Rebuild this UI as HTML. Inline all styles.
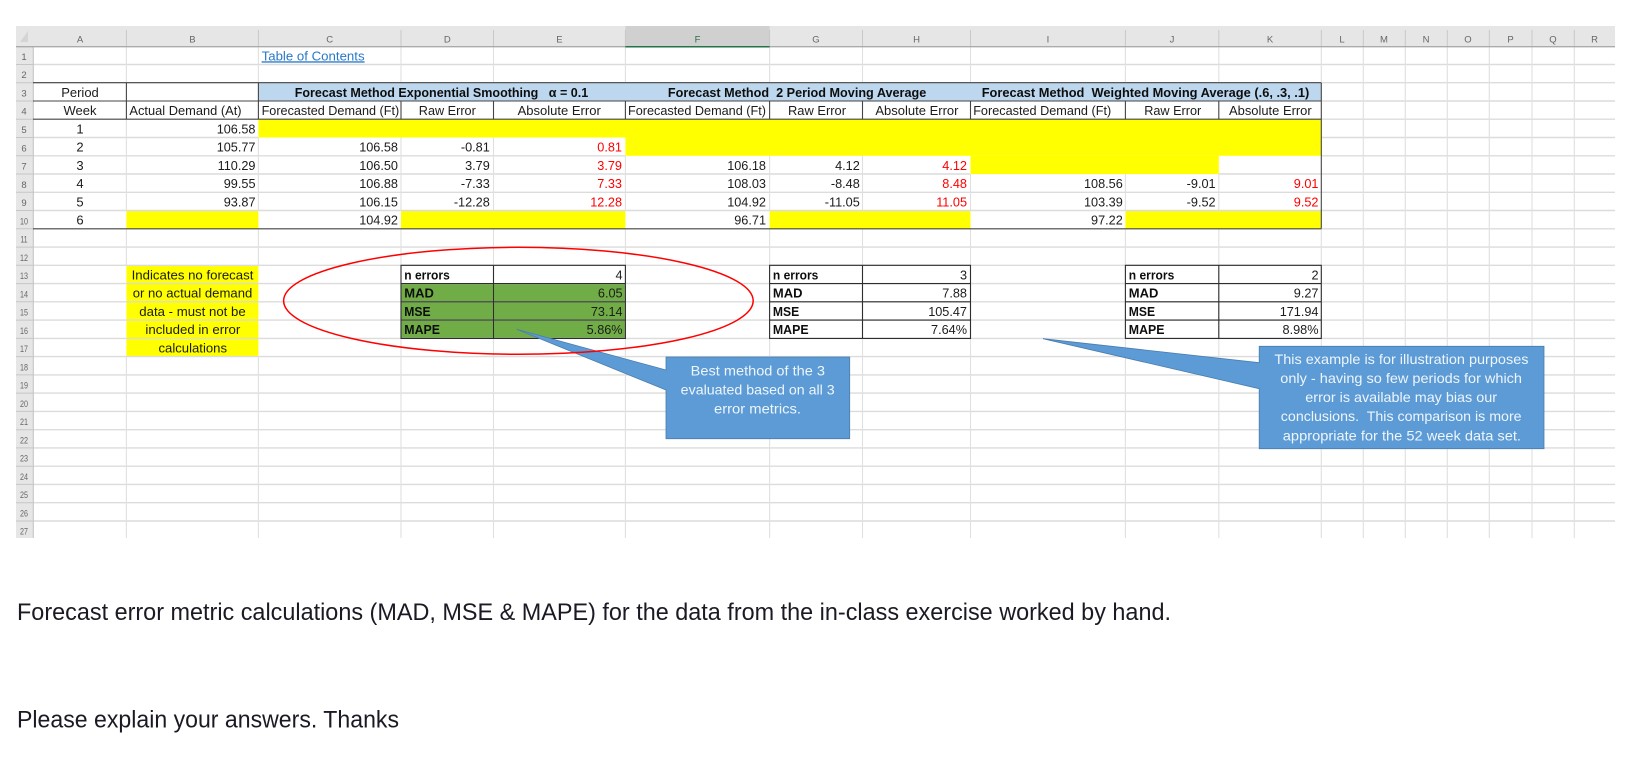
<!DOCTYPE html>
<html><head><meta charset="utf-8"><title>Forecast error metrics</title>
<style>
html,body{margin:0;padding:0;background:#fff;width:1629px;height:769px;overflow:hidden}
svg{display:block;position:absolute;left:0;top:0}
text{font-family:"Liberation Sans",sans-serif}
.c{font-size:13.3px;fill:#1c1c1c}
.r{font-size:12.7px;fill:#1c1c1c;text-anchor:end}
.m{font-size:13px;fill:#1c1c1c;text-anchor:middle}
.red{font-size:12.7px;fill:#f00;text-anchor:end}
.b{font-size:13.3px;fill:#111;font-weight:bold}
.h{font-size:9.5px;fill:#666;text-anchor:middle}
.w{font-size:13.8px;fill:#eef5fb}
.p{font-size:23.6px;fill:#1a1a24}
</style></head><body>
<svg width="1629" height="769" viewBox="0 0 1629 769" xmlns="http://www.w3.org/2000/svg">
<defs><filter id="s" x="0" y="0" width="100%" height="100%"><feGaussianBlur stdDeviation="0.35"/></filter></defs>
<g filter="url(#s)">
<!-- headers -->
<rect x="16" y="26" width="1599" height="20.7" fill="#e6e6e6"/>
<rect x="16" y="26" width="17.3" height="512" fill="#e6e6e6"/>
<rect x="625.4" y="26" width="144.2" height="20.7" fill="#d0d0d0"/>
<polygon points="28,31 28,42 20,42" fill="#d4d4d4"/>
<!-- fills -->
<rect x="258.4" y="82.7" width="1062.9" height="18.3" fill="#BDD7EE"/>
<rect x="258.4" y="119.2" width="1062.9" height="18.3" fill="#ff0"/>
<rect x="625.4" y="137.5" width="695.9" height="18.3" fill="#ff0"/>
<rect x="970.5" y="155.8" width="248.3" height="18.3" fill="#ff0"/>
<rect x="126.4" y="210.5" width="132" height="18.3" fill="#ff0"/>
<rect x="401" y="210.5" width="224.4" height="18.3" fill="#ff0"/>
<rect x="769.6" y="210.5" width="200.9" height="18.3" fill="#ff0"/>
<rect x="1125.4" y="210.5" width="195.9" height="18.3" fill="#ff0"/>
<rect x="126.4" y="265.3" width="132" height="91.3" fill="#ff0"/>
<rect x="401" y="283.6" width="224.4" height="54.8" fill="#70AD47"/>
<!-- horizontal grid -->
<path stroke="#dcdcdc" stroke-width="1.4" fill="none" d="M33 64.5H1615M33 82.7H1615M1321 101H1615M1321 119.2H1615M1321 137.5H1615M33 155.8H625M1321 155.8H1615M33 174H970M1219 174H1615M33 192.3H1615M33 210.5H1615M33 247.1H1615M33 265.3H1615M33 283.6H1615M33 301.8H1615M33 320.1H1615M33 338.4H1615M33 356.6H1615M33 374.9H1615M33 393.1H1615M33 411.4H1615M33 429.7H1615M33 447.9H1615M33 466.2H1615M33 484.4H1615M33 502.7H1615M33 521H1615"/>
<path stroke="#dcdcdc" stroke-width="1.4" fill="none" d="M33 137.5H258M1321 228.8H1615"/>
<!-- vertical grid -->
<path stroke="#e0e0e0" stroke-width="1.1" fill="none" d="M126.4 46.7V82.7M126.4 119.2V210.5M126.4 228.8V265.3M126.4 356.6V538M258.4 46.7V82.7M258.4 137.5V210.5M258.4 228.8V265.3M258.4 356.6V538M401 46.7V82.7M401 137.5V210.5M401 228.8V538M493.5 46.7V82.7M493.5 137.5V210.5M493.5 228.8V538M625.4 46.7V82.7M625.4 155.8V210.5M625.4 228.8V538M769.6 46.7V82.7M769.6 155.8V210.5M769.6 228.8V538M862.5 46.7V82.7M862.5 155.8V210.5M862.5 228.8V538M970.5 46.7V82.7M970.5 174V210.5M970.5 228.8V538M1125.4 46.7V82.7M1125.4 174V210.5M1125.4 228.8V538M1218.8 46.7V82.7M1218.8 174V210.5M1218.8 228.8V538M1321.3 228.8V538M1321.3 46.7V82.7M1363.3 46.7V538M1405.3 46.7V538M1447.3 46.7V538M1489.3 46.7V538M1532 46.7V538M1574.3 46.7V538"/>
<!-- header separators -->
<path stroke="#c8c8c8" stroke-width="1" fill="none" d="M126.4 30V46M258.4 30V46M401 30V46M493.5 30V46M625.4 30V46M769.6 30V46M862.5 30V46M970.5 30V46M1125.4 30V46M1218.8 30V46M1321.3 30V46M1363.3 30V46M1405.3 30V46M1447.3 30V46M1489.3 30V46M1532 30V46M1574.3 30V46"/>
<path stroke="#c6c6c6" stroke-width="1" fill="none" d="M16 64.5H33M16 82.7H33M16 101H33M16 119.2H33M16 137.5H33M16 155.8H33M16 174H33M16 192.3H33M16 210.5H33M16 228.8H33M16 247.1H33M16 265.3H33M16 283.6H33M16 301.8H33M16 320.1H33M16 338.4H33M16 356.6H33M16 374.9H33M16 393.1H33M16 411.4H33M16 429.7H33M16 447.9H33M16 466.2H33M16 484.4H33M16 502.7H33M16 521H33"/>
<path stroke="#c8c8c8" stroke-width="1.2" fill="none" d="M33.3 46V538"/>
<path stroke="#ababab" stroke-width="1.4" fill="none" d="M16 46.7H1615"/>
<path stroke="#217346" stroke-width="1.5" fill="none" d="M625.4 46.7H769.6"/>
<!-- dark borders -->
<path stroke="#444" stroke-width="1.1" fill="none" d="M33 82.7H1321.3M33 101H1321.3M33 119.2H1321.3M33 228.8H1321.3M126.4 82.7V119.2M258.4 82.7V119.2M401 101V119.2M493.5 101V119.2M625.4 101V119.2M769.6 101V119.2M862.5 101V119.2M970.5 101V119.2M1125.4 101V119.2M1218.8 101V119.2M1321.3 82.7V228.8"/>
<path stroke="#2e2e2e" stroke-width="1.1" fill="none" d="M401 265.3H625.4V338.4H401ZM401 283.6H625.4M401 301.8H625.4M401 320.1H625.4M493.5 265.3V338.4M769.6 265.3H970.5V338.4H769.6ZM769.6 283.6H970.5M769.6 301.8H970.5M769.6 320.1H970.5M862.5 265.3V338.4M1125.4 265.3H1321.3V338.4H1125.4ZM1125.4 283.6H1321.3M1125.4 301.8H1321.3M1125.4 320.1H1321.3M1218.8 265.3V338.4"/>

<!-- column headers -->
<text class="h" x="80" y="42.5">A</text><text class="h" x="192.4" y="42.5">B</text><text class="h" x="329.7" y="42.5">C</text><text class="h" x="447.3" y="42.5">D</text><text class="h" x="559.4" y="42.5">E</text><text class="h" x="697.5" y="42.5" style="fill:#2c6e49">F</text><text class="h" x="816" y="42.5">G</text><text class="h" x="916.5" y="42.5">H</text><text class="h" x="1048" y="42.5">I</text><text class="h" x="1172" y="42.5">J</text><text class="h" x="1270" y="42.5">K</text><text class="h" x="1342" y="42.5">L</text><text class="h" x="1384" y="42.5">M</text><text class="h" x="1426" y="42.5">N</text><text class="h" x="1468" y="42.5">O</text><text class="h" x="1510.6" y="42.5">P</text><text class="h" x="1553" y="42.5">Q</text><text class="h" x="1594.6" y="42.5">R</text>
<!-- row headers -->
<text class="h" x="24" y="60">1</text><text class="h" x="24" y="78.2">2</text><text class="h" x="24" y="96.5">3</text><text class="h" x="24" y="114.7">4</text><text class="h" x="24" y="133">5</text><text class="h" x="24" y="151.3">6</text><text class="h" x="24" y="169.5">7</text><text class="h" x="24" y="187.8">8</text><text class="h" x="24" y="206">9</text>
<g>
<text class="h" x="24" y="224.3" textLength="8" lengthAdjust="spacingAndGlyphs">10</text><text class="h" x="24" y="242.6" textLength="7" lengthAdjust="spacingAndGlyphs">11</text><text class="h" x="24" y="260.8" textLength="8" lengthAdjust="spacingAndGlyphs">12</text><text class="h" x="24" y="279.1" textLength="8" lengthAdjust="spacingAndGlyphs">13</text><text class="h" x="24" y="297.3" textLength="8" lengthAdjust="spacingAndGlyphs">14</text><text class="h" x="24" y="315.6" textLength="8" lengthAdjust="spacingAndGlyphs">15</text><text class="h" x="24" y="333.9" textLength="8" lengthAdjust="spacingAndGlyphs">16</text><text class="h" x="24" y="352.1" textLength="8" lengthAdjust="spacingAndGlyphs">17</text><text class="h" x="24" y="370.4" textLength="8" lengthAdjust="spacingAndGlyphs">18</text><text class="h" x="24" y="388.6" textLength="8" lengthAdjust="spacingAndGlyphs">19</text><text class="h" x="24" y="406.9" textLength="8" lengthAdjust="spacingAndGlyphs">20</text><text class="h" x="24" y="425.2" textLength="8" lengthAdjust="spacingAndGlyphs">21</text><text class="h" x="24" y="443.4" textLength="8" lengthAdjust="spacingAndGlyphs">22</text><text class="h" x="24" y="461.7" textLength="8" lengthAdjust="spacingAndGlyphs">23</text><text class="h" x="24" y="479.9" textLength="8" lengthAdjust="spacingAndGlyphs">24</text><text class="h" x="24" y="498.2" textLength="8" lengthAdjust="spacingAndGlyphs">25</text><text class="h" x="24" y="516.5" textLength="8" lengthAdjust="spacingAndGlyphs">26</text><text class="h" x="24" y="534.7" textLength="8" lengthAdjust="spacingAndGlyphs">27</text>
</g>

<!-- link -->
<text x="261.6" y="60.3" font-size="13.3" fill="#2a78c8" text-decoration="underline" textLength="103" lengthAdjust="spacingAndGlyphs">Table of Contents</text>

<!-- row 3 -->
<text class="m" x="80" y="96.8">Period</text>
<text class="b" x="294.7" y="96.8" textLength="293.5" lengthAdjust="spacingAndGlyphs" xml:space="preserve">Forecast Method Exponential Smoothing   α = 0.1</text>
<text class="b" x="667.9" y="96.8" textLength="258.4" lengthAdjust="spacingAndGlyphs" xml:space="preserve">Forecast Method  2 Period Moving Average</text>
<text class="b" x="981.7" y="96.8" textLength="327.6" lengthAdjust="spacingAndGlyphs" xml:space="preserve">Forecast Method  Weighted Moving Average (.6, .3, .1)</text>
<!-- row 4 -->
<text class="m" x="80" y="115">Week</text>
<text class="c" x="129.4" y="115" textLength="112.2" lengthAdjust="spacingAndGlyphs">Actual Demand (At)</text>
<text class="c" x="261.6" y="115" textLength="137.6" lengthAdjust="spacingAndGlyphs">Forecasted Demand (Ft)</text>
<text class="c" x="418.8" y="115" textLength="57" lengthAdjust="spacingAndGlyphs">Raw Error</text>
<text class="c" x="517.6" y="115" textLength="83.2" lengthAdjust="spacingAndGlyphs">Absolute Error</text>
<text class="c" x="628" y="115" textLength="138" lengthAdjust="spacingAndGlyphs">Forecasted Demand (Ft)</text>
<text class="c" x="788" y="115" textLength="58" lengthAdjust="spacingAndGlyphs">Raw Error</text>
<text class="c" x="875.4" y="115" textLength="83.1" lengthAdjust="spacingAndGlyphs">Absolute Error</text>
<text class="c" x="973.2" y="115" textLength="138" lengthAdjust="spacingAndGlyphs">Forecasted Demand (Ft)</text>
<text class="c" x="1144.2" y="115" textLength="57.1" lengthAdjust="spacingAndGlyphs">Raw Error</text>
<text class="c" x="1229" y="115" textLength="82.7" lengthAdjust="spacingAndGlyphs">Absolute Error</text>

<!-- data -->
<text class="m" x="80" y="133.3">1</text><text class="r" x="255.5" y="133.3">106.58</text>
<text class="m" x="80" y="151.6">2</text><text class="r" x="255.5" y="151.6">105.77</text><text class="r" x="398" y="151.6">106.58</text><text class="r" x="489.8" y="151.6">-0.81</text><text class="red" x="622" y="151.6">0.81</text>
<text class="m" x="80" y="169.8">3</text><text class="r" x="255.5" y="169.8">110.29</text><text class="r" x="398" y="169.8">106.50</text><text class="r" x="489.8" y="169.8">3.79</text><text class="red" x="622" y="169.8">3.79</text><text class="r" x="766" y="169.8">106.18</text><text class="r" x="859.8" y="169.8">4.12</text><text class="red" x="967" y="169.8">4.12</text>
<text class="m" x="80" y="188.1">4</text><text class="r" x="255.5" y="188.1">99.55</text><text class="r" x="398" y="188.1">106.88</text><text class="r" x="489.8" y="188.1">-7.33</text><text class="red" x="622" y="188.1">7.33</text><text class="r" x="766" y="188.1">108.03</text><text class="r" x="859.8" y="188.1">-8.48</text><text class="red" x="967" y="188.1">8.48</text><text class="r" x="1122.8" y="188.1">108.56</text><text class="r" x="1215.6" y="188.1">-9.01</text><text class="red" x="1318.5" y="188.1">9.01</text>
<text class="m" x="80" y="206.3">5</text><text class="r" x="255.5" y="206.3">93.87</text><text class="r" x="398" y="206.3">106.15</text><text class="r" x="489.8" y="206.3">-12.28</text><text class="red" x="622" y="206.3">12.28</text><text class="r" x="766" y="206.3">104.92</text><text class="r" x="859.8" y="206.3">-11.05</text><text class="red" x="967" y="206.3">11.05</text><text class="r" x="1122.8" y="206.3">103.39</text><text class="r" x="1215.6" y="206.3">-9.52</text><text class="red" x="1318.5" y="206.3">9.52</text>
<text class="m" x="80" y="224.6">6</text><text class="r" x="398" y="224.6">104.92</text><text class="r" x="766" y="224.6">96.71</text><text class="r" x="1122.8" y="224.6">97.22</text>

<!-- yellow note -->
<text class="c" x="131.6" y="279.4" textLength="121.8" lengthAdjust="spacingAndGlyphs">Indicates no forecast</text>
<text class="c" x="132.7" y="297.6" textLength="119.6" lengthAdjust="spacingAndGlyphs">or no actual demand</text>
<text class="c" x="139.3" y="315.9" textLength="106.4" lengthAdjust="spacingAndGlyphs">data - must not be</text>
<text class="c" x="145.4" y="334.2" textLength="94.9" lengthAdjust="spacingAndGlyphs">included in error</text>
<text class="c" x="158.5" y="352.4" textLength="68.5" lengthAdjust="spacingAndGlyphs">calculations</text>

<!-- table 1 -->
<text class="b" x="404.3" y="279.4" textLength="45.5" lengthAdjust="spacingAndGlyphs">n errors</text><text class="r" x="622.6" y="279.4">4</text>
<text class="b" x="404.3" y="297.6" textLength="29.6" lengthAdjust="spacingAndGlyphs">MAD</text><text class="r" x="622.6" y="297.6">6.05</text>
<text class="b" x="404.3" y="315.9" textLength="26.3" lengthAdjust="spacingAndGlyphs">MSE</text><text class="r" x="622.6" y="315.9">73.14</text>
<text class="b" x="404.3" y="334.2" textLength="35.7" lengthAdjust="spacingAndGlyphs">MAPE</text><text class="r" x="622.6" y="334.2">5.86%</text>
<!-- table 2 -->
<text class="b" x="772.9" y="279.4" textLength="45.5" lengthAdjust="spacingAndGlyphs">n errors</text><text class="r" x="967" y="279.4">3</text>
<text class="b" x="772.9" y="297.6" textLength="29.6" lengthAdjust="spacingAndGlyphs">MAD</text><text class="r" x="967" y="297.6">7.88</text>
<text class="b" x="772.9" y="315.9" textLength="26.3" lengthAdjust="spacingAndGlyphs">MSE</text><text class="r" x="967" y="315.9">105.47</text>
<text class="b" x="772.9" y="334.2" textLength="35.7" lengthAdjust="spacingAndGlyphs">MAPE</text><text class="r" x="967" y="334.2">7.64%</text>
<!-- table 3 -->
<text class="b" x="1128.8" y="279.4" textLength="45.5" lengthAdjust="spacingAndGlyphs">n errors</text><text class="r" x="1318.5" y="279.4">2</text>
<text class="b" x="1128.8" y="297.6" textLength="29.6" lengthAdjust="spacingAndGlyphs">MAD</text><text class="r" x="1318.5" y="297.6">9.27</text>
<text class="b" x="1128.8" y="315.9" textLength="26.3" lengthAdjust="spacingAndGlyphs">MSE</text><text class="r" x="1318.5" y="315.9">171.94</text>
<text class="b" x="1128.8" y="334.2" textLength="35.7" lengthAdjust="spacingAndGlyphs">MAPE</text><text class="r" x="1318.5" y="334.2">8.98%</text>

<!-- callout 1 -->
<path d="M666 357H849.7V438.7H666V390L516.7 329.3L666 370Z" fill="#5B9BD5" stroke="#4a7eac" stroke-width="0.8"/>
<ellipse cx="518.4" cy="300.8" rx="234.8" ry="53.5" fill="none" stroke="#f00" stroke-width="1.5"/>
<text class="w" x="690.7" y="375.4" textLength="134.3" lengthAdjust="spacingAndGlyphs">Best method of the 3</text>
<text class="w" x="680.7" y="394.7" textLength="154" lengthAdjust="spacingAndGlyphs">evaluated based on all 3</text>
<text class="w" x="714" y="413.7" textLength="87" lengthAdjust="spacingAndGlyphs">error metrics.</text>
<!-- callout 2 -->
<path d="M1259.2 346.3H1544V448.7H1259.2V388.7L1043 338.7L1259.2 362.7Z" fill="#5B9BD5" stroke="#4a7eac" stroke-width="0.8"/>
<text class="w" x="1274.4" y="364" textLength="254.1" lengthAdjust="spacingAndGlyphs">This example is for illustration purposes</text>
<text class="w" x="1280.3" y="383" textLength="241.7" lengthAdjust="spacingAndGlyphs">only - having so few periods for which</text>
<text class="w" x="1305.3" y="402" textLength="191.7" lengthAdjust="spacingAndGlyphs">error is available may bias our</text>
<text class="w" x="1280.8" y="421" textLength="240.8" lengthAdjust="spacingAndGlyphs" xml:space="preserve">conclusions.  This comparison is more</text>
<text class="w" x="1282.8" y="440.4" textLength="238.2" lengthAdjust="spacingAndGlyphs">appropriate for the 52 week data set.</text>
</g>
<!-- page text -->
<text class="p" x="17" y="620" textLength="1154" lengthAdjust="spacingAndGlyphs">Forecast error metric calculations (MAD, MSE &amp; MAPE) for the data from the in-class exercise worked by hand.</text>
<text class="p" x="17" y="727.7" textLength="382" lengthAdjust="spacingAndGlyphs">Please explain your answers. Thanks</text>
</svg>
</body></html>
